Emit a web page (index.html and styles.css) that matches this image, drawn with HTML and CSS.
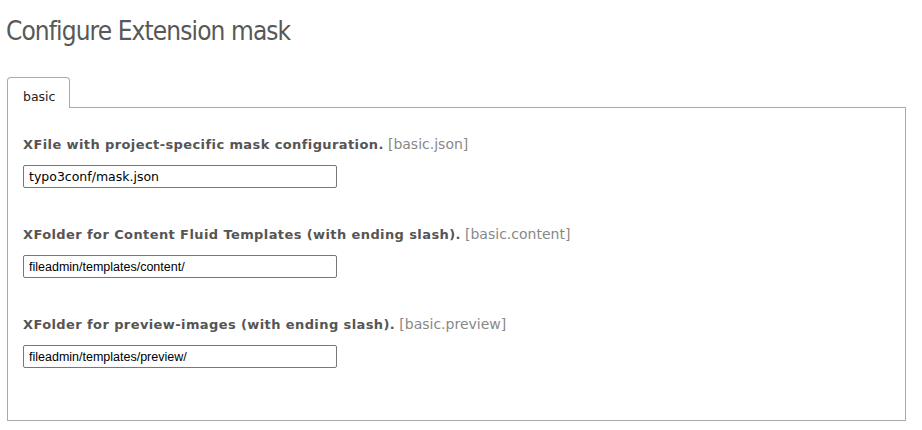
FILE: index.html
```html
<!DOCTYPE html>
<html>
<head>
<meta charset="utf-8">
<link rel="stylesheet" href="styles.css">
</head>
<body>
<h1 class="title">Configure Extension mask</h1>
<div class="tabs">
  <div class="tab-bar">
    <div class="tab">basic</div>
  </div>
  <div class="panel">
    <div class="field">
      <div class="label"><b>XFile with project-specific mask configuration.</b> <span class="key">[basic.json]</span></div>
      <input class="input input-wide" type="text" value="typo3conf/mask.json">
    </div>
    <div class="field">
      <div class="label"><b>XFolder for Content Fluid Templates (with ending slash).</b> <span class="key">[basic.content]</span></div>
      <input class="input" type="text" value="fileadmin/templates/content/">
    </div>
    <div class="field">
      <div class="label"><b>XFolder for preview-images (with ending slash).</b> <span class="key">[basic.preview]</span></div>
      <input class="input" type="text" value="fileadmin/templates/preview/">
    </div>
  </div>
</div>
</body>
</html>
```
FILE: styles.css
```css
html, body {
  margin: 0;
  padding: 0;
  background: #fff;
}
body {
  padding: 0 16px 0 7px;
  font-family: "DejaVu Sans", Verdana, sans-serif;
}
.title {
  margin: 0;
  padding: 14px 0 0 0;
  height: 64px;
  box-sizing: border-box;
  font-family: "DejaVu Sans Condensed", sans-serif;
  font-weight: normal;
  font-size: 26px;
  letter-spacing: -0.9px;
  line-height: 34px;
  color: #585858;
  margin-left: -1px;
}
.tab-bar {
  display: flex;
  height: 30px;
  margin-top: 13px;
}
.tab {
  width: 63px;
  box-sizing: border-box;
  height: 31px;
  border: 1px solid #aaa;
  border-bottom: none;
  border-radius: 4px 4px 0 0;
  background: #fff;
  font-family: "DejaVu Sans", Verdana, sans-serif;
  font-size: 12.5px;
  color: #222;
  padding: 11px 0 0 15px;
  position: relative;
  z-index: 1;
}
.panel {
  border: 1px solid #aaa;
  height: 314px;
  box-sizing: border-box;
  padding: 28px 0 0 15px;
}
.field {
  height: 90px;
}
.label {
  font-size: 13px;
  line-height: 16px;
  color: #555;
  margin-bottom: 12px;
}
.label b {
  font-weight: bold;
  letter-spacing: 0.4px;
}
.key {
  font-family: "DejaVu Sans", Verdana, sans-serif;
  color: #888;
  font-size: 14px;
}
.input {
  display: block;
  width: 314px;
  height: 23px;
  box-sizing: border-box;
  border: 1px solid #777;
  border-radius: 2px;
  padding: 0 5px;
  margin: 0;
  font-family: "Liberation Sans", Arial, sans-serif;
  font-size: 12.5px;
  color: #000;
  outline: none;
}
.input-wide {
  font-family: "DejaVu Sans", Verdana, sans-serif;
  font-size: 12.5px;
}
```
